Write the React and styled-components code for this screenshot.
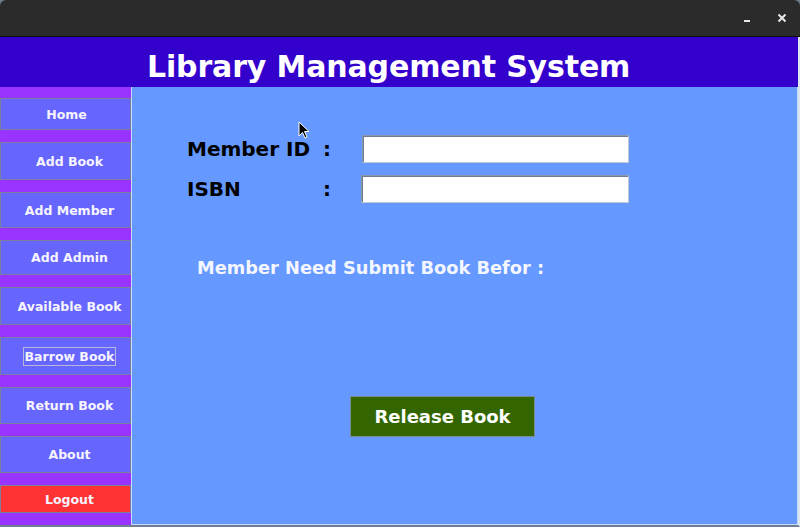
import styled, { createGlobalStyle } from "styled-components";

const GlobalStyle = createGlobalStyle`
  html, body {
    margin: 0;
    padding: 0;
    background: #ffffff;
  }
  body {
    width: 800px;
    height: 527px;
    overflow: hidden;
    font-family: "DejaVu Sans", "Liberation Sans", sans-serif;
  }
`;

const menu = [
  { label: "Home", height: 32, shift: 2 },
  { label: "Add Book", height: 38 },
  { label: "Add Member", height: 36 },
  { label: "Add Admin", height: 35 },
  { label: "Available Book", height: 38 },
  { label: "Barrow Book", height: 38, focused: true },
  { label: "Return Book", height: 37 },
  { label: "About", height: 37 },
  { label: "Logout", height: 28, danger: true },
];

const App = () => {
  return (
    <>
      <GlobalStyle />
      <Window>
        <TitleBar>
          <WinButton aria-label="minimize">
            <svg width="10" height="10" viewBox="0 0 10 10">
              <rect x="2" y="7" width="6" height="2" fill="#e8e8e8" />
            </svg>
          </WinButton>
          <WinButton aria-label="close">
            <svg width="10" height="10" viewBox="0 0 10 10">
              <path d="M1.5 1.5 L8.5 8.5 M8.5 1.5 L1.5 8.5" stroke="#e8e8e8" strokeWidth="2" />
            </svg>
          </WinButton>
        </TitleBar>

        <Frame>
          <Header>
            <Title>Library Management System</Title>
          </Header>

          <Body>
            <Sidebar>
              {menu.map((item) => (
                <NavButton
                  key={item.label}
                  $height={item.height}
                  $shift={item.shift ?? 8}
                  $danger={item.danger}
                >
                  <NavLabel $focused={item.focused}>{item.label}</NavLabel>
                </NavButton>
              ))}
            </Sidebar>

            <Main>
              <Form>
                <FieldLabel>Member ID</FieldLabel>
                <Colon>:</Colon>
                <TextInput />
                <FieldLabel>ISBN</FieldLabel>
                <Colon>:</Colon>
                <TextInput $nudge={-1} />
              </Form>

              <Note>Member Need Submit Book Befor :</Note>

              <ReleaseButton>Release Book</ReleaseButton>

              <Cursor width="12" height="19" viewBox="0 0 12 19">
                <path
                  d="M1 1 L1 15 L4.5 11.5 L7 17 L9 16 L6.5 10.5 L11 10.5 Z"
                  fill="#000"
                  stroke="#fff"
                  strokeWidth="1"
                  strokeLinejoin="round"
                />
              </Cursor>
            </Main>
          </Body>
        </Frame>
      </Window>
    </>
  );
};

export default App;

const Window = styled.div`
  width: 800px;
  height: 527px;
  display: flex;
  flex-direction: column;
  background: #6e7f92;
`;

const TitleBar = styled.div`
  height: 36px;
  flex: none;
  display: flex;
  align-items: center;
  justify-content: flex-end;
  gap: 15px;
  padding-right: 8px;
  background: #2b2b2b;
  border-radius: 6px 6px 0 0;
  border-bottom: 1px solid #0c0c0c;
`;

const WinButton = styled.div`
  width: 20px;
  height: 20px;
  display: flex;
  align-items: center;
  justify-content: center;
`;

const Frame = styled.div`
  flex: 1;
  display: flex;
  flex-direction: column;
  border-right: 2px solid #dce6f0;
  border-bottom: 2px solid #6e7f92;
  min-height: 0;
`;

const Header = styled.div`
  height: 50px;
  flex: none;
  display: flex;
  align-items: center;
  padding-left: 147px;
  padding-top: 9px;
  box-sizing: border-box;
  background: #3300cc;
`;

const Title = styled.div`
  color: #ffffff;
  font-family: "DejaVu Sans", sans-serif;
  font-weight: bold;
  font-size: 30px;
  letter-spacing: -0.15px;
`;

const Body = styled.div`
  flex: 1;
  display: flex;
  min-height: 0;
`;

const Sidebar = styled.div`
  width: 131px;
  flex: none;
  display: flex;
  flex-direction: column;
  gap: 12px;
  padding-top: 11px;
  box-sizing: border-box;
  background: #9933ff;
`;

const NavButton = styled.div`
  height: ${(p) => p.$height}px;
  flex: none;
  display: flex;
  align-items: center;
  justify-content: center;
  padding-left: ${(p) => p.$shift}px;
  box-sizing: border-box;
  background: ${(p) => (p.$danger ? "#ff3333" : "#6666ff")};
  border: 1px solid #7d7d9c;
  color: #f6f4ff;
  font-family: "DejaVu Sans", sans-serif;
  font-weight: bold;
  font-size: 12.5px;
`;

const NavLabel = styled.span`
  padding: 1px 1px;
  border: 1px solid ${(p) => (p.$focused ? "#b8b8dc" : "transparent")};
`;

const Main = styled.div`
  flex: 1;
  position: relative;
  display: flex;
  flex-direction: column;
  align-items: flex-start;
  padding: 48px 0 0 55px;
  background: #6699ff;
  border: 1px solid #c8daf6;
  border-top: none;
`;

const Form = styled.div`
  display: grid;
  grid-template-columns: 137px 38px 267px;
  row-gap: 12px;
  align-items: center;
`;

const FieldLabel = styled.div`
  color: #000;
  font-family: "DejaVu Sans", sans-serif;
  font-weight: bold;
  font-size: 20px;
`;

const Colon = styled(FieldLabel)`
  margin-left: -1px;
`;

const TextInput = styled.div`
  height: 28px;
  box-sizing: border-box;
  margin-left: ${(p) => p.$nudge ?? 0}px;
  background: #ffffff;
  border: 1px solid #8a98ae;
  border-right-color: #c0c8d6;
  border-bottom-color: #c0c8d6;
  box-shadow: inset 1px 1px 0 #6f7d92;
`;

const Note = styled.div`
  margin: 54px 0 0 10px;
  color: #f4f6ff;
  font-family: "DejaVu Sans", sans-serif;
  font-weight: bold;
  font-size: 17.8px;
`;

const ReleaseButton = styled.div`
  margin: 118px 0 0 163px;
  width: 185px;
  height: 41px;
  box-sizing: border-box;
  display: flex;
  align-items: center;
  justify-content: center;
  background: #336600;
  border: 1px solid #7b8a8c;
  color: #ffffff;
  font-family: "DejaVu Sans", sans-serif;
  font-weight: bold;
  font-size: 18px;
`;

const Cursor = styled.svg`
  position: absolute;
  left: 166px;
  top: 34px;
`;
